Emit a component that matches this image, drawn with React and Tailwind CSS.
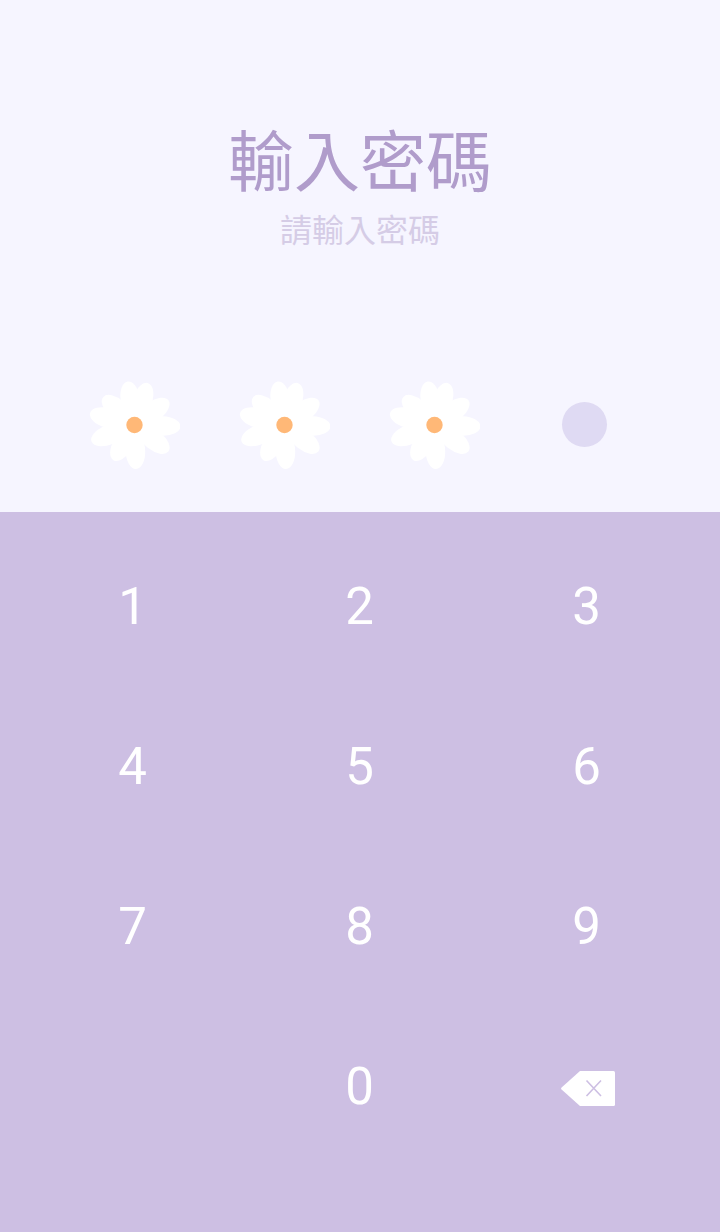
const fontStack = { fontFamily: '"Noto Sans CJK TC", sans-serif' };

// angle and length of each petal, read off the reference
const petals = [
  [-9, 44], [18, 44], [54, 42], [92, 46], [128, 43],
  [178, 44], [211, 41], [249, 46], [285, 46], [312, 42],
];

const Flower = () => (
  <svg width="92" height="92" viewBox="-46.5 -46 92 92">
    <circle r="19" fill="#ffffff" />
    {petals.map(([angle, len]) => (
      <ellipse
        key={angle}
        cy={-(len - 18)}
        rx="9.8"
        ry="18"
        fill="#ffffff"
        transform={`rotate(${angle})`}
      />
    ))}
    <circle r="8.2" fill="#ffb877" />
  </svg>
);

const Backspace = () => (
  <svg width="54" height="35" viewBox="0 0 54 35" className="mt-[2px] ml-[2px]">
    <path d="M19 0H52.5a1.5 1.5 0 0 1 1.5 1.5V33.5a1.5 1.5 0 0 1-1.5 1.5H19L.6 18.5a1.4 1.4 0 0 1 0-2z" fill="#ffffff" />
    <path d="M25.5 9.5L40 25M40 9.5L25.5 25" stroke="#cdbfe3" strokeWidth="1.6" fill="none" />
  </svg>
);

const keys = ['1', '2', '3', '4', '5', '6', '7', '8', '9', '', '0', 'del'];

export default function App() {
  return (
    <div className="w-[720px] h-[1232px] flex flex-col bg-[#f6f5ff] overflow-hidden">
      {/* Header */}
      <div className="h-[512px] flex flex-col items-center">
        <h1 className="mt-[109px] h-[96px] text-[66px] leading-[96px] font-normal text-[#b09ccb]" style={fontStack}>輸入密碼</h1>
        <p className="h-[46px] text-[32px] leading-[46px] text-[#d5cce6]" style={fontStack}>請輸入密碼</p>

        {/* PIN dots */}
        <div className="mt-[128px] pl-[59px] pr-[61px] w-full grid grid-cols-4 items-center">
          <div className="flex justify-center"><Flower /></div>
          <div className="flex justify-center"><Flower /></div>
          <div className="flex justify-center"><Flower /></div>
          <div className="flex justify-center">
            <div className="w-[45px] h-[45px] rounded-full bg-[#dfdaf3] mb-[1px] ml-[1px]" />
          </div>
        </div>
      </div>

      {/* Keypad */}
      <div className="flex-1 bg-[#cdbfe3] pl-[19px] pr-[20px] pt-[15px] grid grid-cols-3 auto-rows-[160px]">
        {keys.map((key, i) => (
          <div key={i} className="flex items-center justify-center text-white text-[51px] font-[Roboto,sans-serif]">
            {key === 'del' ? <Backspace /> : key}
          </div>
        ))}
      </div>
    </div>
  );
}
